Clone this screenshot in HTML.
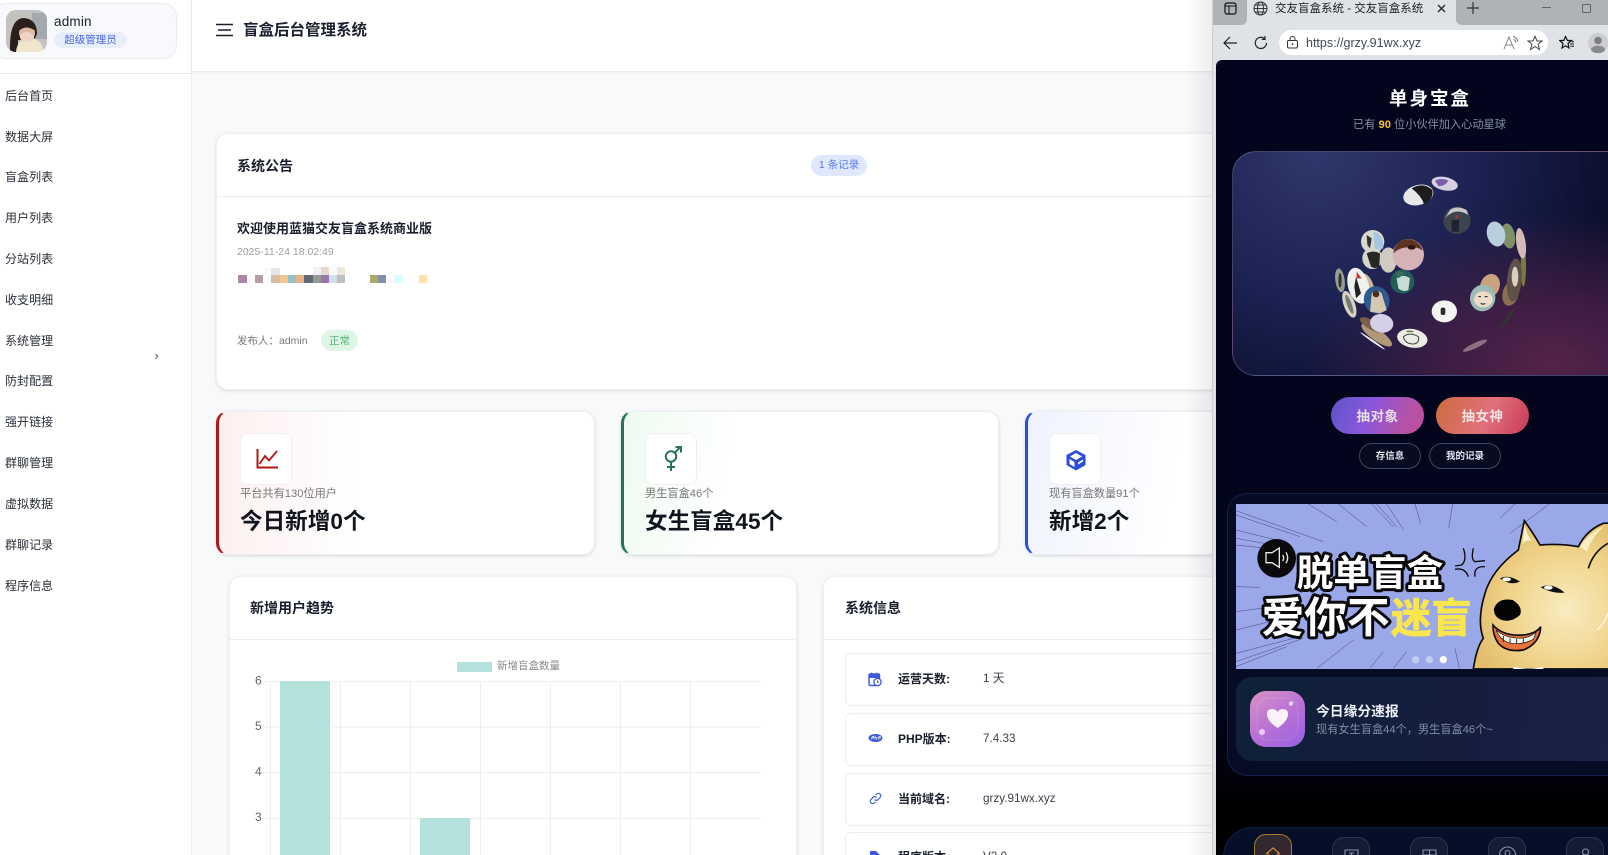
<!DOCTYPE html>
<html lang="zh-CN"><head><meta charset="utf-8"><title>盲盒后台管理系统</title>
<style>
*{box-sizing:border-box}
html,body{margin:0;padding:0;width:1608px;height:855px;overflow:hidden;background:#f8f9fb}
body{position:relative;font-family:"Liberation Sans","Noto Sans CJK SC",sans-serif;color:#1a1f2e}
.a{position:absolute;white-space:nowrap}
.m{position:absolute;left:5px;font-size:12px;line-height:20px;color:#2a2f3a;letter-spacing:.05px}
.card{position:absolute;background:#fff;border-radius:12px;border:1px solid #eef0f3;box-shadow:0 1px 3px rgba(0,0,0,.12);overflow:hidden}
.ct{position:absolute;font-size:14px;font-weight:700;line-height:20px;color:#1a1f2e;white-space:nowrap}
.stat{position:absolute;top:411px;height:144px;background:#fff;border-radius:12px;border:1px solid #eceef1;border-left:3px solid;box-shadow:0 1px 3px rgba(0,0,0,.14);overflow:hidden}
.ib{position:absolute;left:21px;top:21px;width:52px;height:52px;background:#fff;border-radius:8px;border:1px solid #f0f0f2}
.st{position:absolute;left:21px;top:72px;font-size:11.2px;line-height:20px;color:#777;white-space:nowrap}
.bg{position:absolute;left:21px;top:93px;font-size:22.6px;font-weight:700;line-height:34px;color:#10141f;white-space:nowrap}
.row{position:absolute;left:845px;width:400px;height:53px;background:#fff;border:1px solid #eceef1;border-radius:6px}
.lb{position:absolute;left:898px;font-size:12px;font-weight:700;line-height:20px;color:#1a1f2e;white-space:nowrap}
.vl{position:absolute;left:983px;font-size:11.7px;line-height:20px;color:#3a3f4a;white-space:nowrap}
.tile{position:absolute;top:837px;width:38px;height:40px;background:#141c34;border:1px solid #2b3550;border-radius:12px}
</style></head><body>

<!-- sidebar -->
<div class="a" style="left:0;top:0;width:192px;height:855px;background:#fff;border-right:1px solid #eaecef"></div>
<div class="a" style="left:-8px;top:3px;width:185px;height:56px;background:#f8f9fc;border:1px solid #e9ebef;border-radius:14px"></div>
<svg class="a" style="left:6px;top:10px" width="41" height="42" viewBox="0 0 41 42">
<defs><clipPath id="av"><rect width="41" height="42" rx="10"/></clipPath></defs>
<g clip-path="url(#av)"><rect width="41" height="42" fill="#c4c2bf"/><rect x="26" y="3" width="15" height="26" fill="#a4a9b0"/>
<path d="M4 42Q3 8 18 8Q31 9 31 24L28 30H12V42Z" fill="#2b1f1b"/>
<path d="M10 42Q11 30 22 28Q35 27 38 42Z" fill="#efe6cb"/>
<ellipse cx="21" cy="23" rx="8" ry="8" fill="#dfb8a6"/><ellipse cx="21" cy="27" rx="7" ry="5" fill="#ecd4c6"/>
<path d="M13 17Q20 11 29 18L28 20Q20 15 14 20Z" fill="#2b1f1b"/></g></svg>
<div class="a" style="left:54px;top:12px;font-size:13.5px;line-height:20px;color:#1a1f2e;letter-spacing:.2px">admin</div>
<div class="a" style="left:54px;top:32px;width:73px;height:16px;background:#e9eefb;border-radius:8px;text-align:center;font-size:10.5px;line-height:16px;color:#4a68e8">超级管理员</div>
<div class="a" style="left:0;top:73px;width:192px;height:1px;background:#e8eaee"></div>
<div class="a" style="left:192px;top:0;width:1030px;height:72px;background:#fff;border-bottom:1px solid #e8eaee;box-shadow:0 1px 2px rgba(0,0,0,.04)"></div>
<div class="m" style="top:86px">后台首页</div>
<div class="m" style="top:127px">数据大屏</div>
<div class="m" style="top:167px">盲盒列表</div>
<div class="m" style="top:208px">用户列表</div>
<div class="m" style="top:249px">分站列表</div>
<div class="m" style="top:290px">收支明细</div>
<div class="m" style="top:331px">系统管理</div>
<div class="m" style="top:371px">防封配置</div>
<div class="m" style="top:412px">强开链接</div>
<div class="m" style="top:453px">群聊管理</div>
<div class="m" style="top:494px">虚拟数据</div>
<div class="m" style="top:535px">群聊记录</div>
<div class="m" style="top:576px">程序信息</div>
<svg class="a" style="left:154px;top:353px" width="5" height="7"><path d="M1.5 1L3.8 3.5L1.5 6" fill="none" stroke="#666" stroke-width="1"/></svg>

<!-- header -->
<svg class="a" style="left:215px;top:23px" width="19" height="14"><path d="M1 1.5H18M3 7H16M1 12.5H18" stroke="#1a1f2e" stroke-width="1.6" fill="none"/></svg>
<div class="a" style="left:243px;top:20px;font-size:15.5px;font-weight:700;line-height:22px;color:#1a1f2e">盲盒后台管理系统</div>

<!-- announcement -->
<div class="card" style="left:216px;top:133px;width:1040px;height:257px"></div>
<div class="a" style="left:216px;top:196px;width:1000px;height:1px;background:#eceef1"></div>
<div class="ct" style="left:237px;top:156px">系统公告</div>
<div class="a" style="left:811px;top:155px;width:56px;height:21px;background:#dfe8fd;border-radius:11px;text-align:center;font-size:10.5px;line-height:21px;color:#5b7cf0">1 条记录</div>
<div class="a" style="left:237px;top:219px;font-size:13px;font-weight:700;line-height:20px;color:#1a1f2e">欢迎使用蓝猫交友盲盒系统商业版</div>
<div class="a" style="left:237px;top:242px;font-size:10.5px;line-height:20px;color:#9a9da3">2025-11-24 18:02:49</div>
<svg class="a" style="left:230px;top:260px" width="210" height="30">
<g transform="translate(-230,-260)">
<rect x="238" y="275" width="9" height="8" fill="#ae88a2"/><rect x="255" y="275" width="8" height="8" fill="#b89aa2"/><rect x="264" y="275" width="7" height="8" fill="#f7fdfe"/><rect x="271" y="275" width="9" height="8" fill="#dcbba6"/><rect x="271" y="268" width="9" height="7" fill="#e5e5e5"/><rect x="264" y="268" width="7" height="7" fill="#f8fbfc"/><rect x="280" y="275" width="8" height="8" fill="#f3c88f"/><rect x="288" y="275" width="8" height="8" fill="#95c1cb"/><rect x="296" y="275" width="8" height="8" fill="#e5b482"/><rect x="304" y="275" width="9" height="8" fill="#5f6873"/><rect x="313" y="275" width="8" height="8" fill="#979994"/><rect x="321" y="275" width="8" height="8" fill="#9a77ab"/><rect x="329" y="275" width="8" height="8" fill="#d0e0ee"/><rect x="337" y="275" width="8" height="8" fill="#bfc1be"/>
<rect x="313" y="267" width="8" height="8" fill="#eef1f6"/><rect x="321" y="267" width="8" height="8" fill="#e8d9cf"/><rect x="329" y="267" width="8" height="8" fill="#f8fafc"/><rect x="337" y="267" width="8" height="8" fill="#eee6da"/>
<rect x="370" y="275" width="8" height="8" fill="#a7a96f"/><rect x="378" y="275" width="8" height="8" fill="#8590ad"/><rect x="394" y="275" width="9" height="8" fill="#dcfdfd"/><rect x="419" y="275" width="8" height="8" fill="#fde3ac"/>
</g></svg>
<div class="a" style="left:237px;top:331px;font-size:10.5px;line-height:20px;color:#777">发布人：admin</div>
<div class="a" style="left:321px;top:330px;width:37px;height:21px;background:#dff6e6;border-radius:11px;text-align:center;font-size:10.5px;line-height:23px;color:#57b67a">正常</div>

<!-- stats -->
<div class="stat" style="left:216px;width:379px;border-left-color:#b01a12;background:linear-gradient(90deg,#fdf0f0,#fff 38%)">
<div class="ib"><svg style="position:absolute;left:14px;top:14px" width="24" height="22" viewBox="0 0 24 22"><path d="M2.5 1V19.5H23" fill="none" stroke="#b01a12" stroke-width="2"/><path d="M4.5 16L10 8L14 12.5L22 3" fill="none" stroke="#b01a12" stroke-width="1.8"/></svg></div>
<div class="st">平台共有130位用户</div><div class="bg">今日新增0个</div></div>
<div class="stat" style="left:621px;width:378px;border-left-color:#257453;background:linear-gradient(100deg,#effaf1,#fff 30%)">
<div class="ib"><svg style="position:absolute;left:14px;top:12px" width="24" height="26" viewBox="0 0 24 26"><circle cx="11" cy="10.5" r="5.2" fill="none" stroke="#257453" stroke-width="2"/><path d="M11 15.5V25M7 21H15M14.500 7L20.500 1M15.500 1H21V6.500" fill="none" stroke="#257453" stroke-width="2"/></svg></div>
<div class="st">男生盲盒46个</div><div class="bg">女生盲盒45个</div></div>
<div class="stat" style="left:1025px;width:300px;border-left-color:#2b4fd8;background:linear-gradient(100deg,#eff3fe,#fff 50%)">
<div class="ib"><svg style="position:absolute;left:14px;top:14px" width="24" height="24" viewBox="0 0 24 24"><path d="M12 2L21.500 7V17L12 22.500L2.500 17V7Z" fill="#2b4fd8"/><path d="M12 5L18 8.500L12 12L6 8.500ZM5.500 11L10.500 14V19L5.500 16ZM14 14.500L19 11.500V13.500L14 16.500Z" fill="#fff"/></svg></div>
<div class="st">现有盲盒数量91个</div><div class="bg">新增2个</div></div>

<!-- chart card -->
<div class="card" style="left:229px;top:576px;width:568px;height:300px"></div>
<div class="a" style="left:229px;top:639px;width:568px;height:1px;background:#eceef1"></div>
<div class="ct" style="left:250px;top:598px">新增用户趋势</div>
<div class="a" style="left:457px;top:662px;width:35px;height:10px;background:#b2e2db"></div>
<div class="a" style="left:497px;top:656px;font-size:10.5px;line-height:20px;color:#888">新增盲盒数量</div>
<svg class="a" style="left:240px;top:670px" width="540" height="185">
<g transform="translate(-240,-670)" stroke="#eceef0" stroke-width="1" fill="none">
<path d="M261 681.500H761M261 727H761M261 772.500H761M261 818.500H761"/>
<path d="M270.500 681V855M340.500 681V855M410.500 681V855M480.500 681V855M550.500 681V855M620.500 681V855M690.500 681V855"/>
</g>
<rect x="40" y="11" width="50" height="175" fill="#b2e2db"/><rect x="180" y="148" width="50" height="40" fill="#b2e2db"/>
<g font-size="12" fill="#666" font-family="Liberation Sans"><text x="15" y="14.500">6</text><text x="15" y="60">5</text><text x="15" y="105.500">4</text><text x="15" y="151">3</text></g>
</svg>

<!-- system info -->
<div class="card" style="left:823px;top:576px;width:440px;height:300px"></div>
<div class="a" style="left:823px;top:639px;width:400px;height:1px;background:#eceef1"></div>
<div class="ct" style="left:845px;top:598px">系统信息</div>
<div class="row" style="top:653px"></div><div class="row" style="top:713px"></div><div class="row" style="top:773px"></div><div class="row" style="top:832px"></div>
<svg class="a" style="left:868px;top:672px" width="14" height="15" viewBox="0 0 14 15"><rect x="1" y="2" width="10.500" height="11.500" rx="1.500" fill="none" stroke="#3a5be0" stroke-width="1.500"/><path d="M1 2H11.500V5.500H1ZM3.500 .5V2.500M9 .5V2.500" fill="#3a5be0" stroke="#3a5be0"/><circle cx="9.500" cy="10" r="3.600" fill="#fff" stroke="#3a5be0" stroke-width="1.300"/><path d="M9.500 8.400V10.200H11" stroke="#3a5be0" fill="none"/></svg>
<div class="lb" style="top:669px">运营天数:</div><div class="vl" style="top:669px">1 天</div>
<svg class="a" style="left:868px;top:733px" width="15" height="10" viewBox="0 0 15 10"><ellipse cx="7.500" cy="5" rx="7" ry="4" fill="#3a5be0"/><path d="M3.500 6.500L4.200 3.500H5.700V5H4M7 2.800V6.500M7 4.500H8.800V6.500M10.300 6.500L11 3.500H12.300V5H10.700" stroke="#fff" fill="none" stroke-width=".7"/></svg>
<div class="lb" style="top:729px">PHP版本:</div><div class="vl" style="top:729px">7.4.33</div>
<svg class="a" style="left:869px;top:792px" width="13" height="13" viewBox="0 0 13 13"><path d="M5.500 7.500A2.300 2.300 0 0 0 8.800 7.800L11 5.500A2.400 2.400 0 0 0 7.600 2L6.600 3M7.500 5.500A2.300 2.300 0 0 0 4.200 5.200L2 7.500A2.400 2.400 0 0 0 5.400 11L6.400 10" fill="none" stroke="#3a5be0" stroke-width="1.200"/></svg>
<div class="lb" style="top:789px">当前域名:</div><div class="vl" style="top:789px">grzy.91wx.xyz</div>
<svg class="a" style="left:869px;top:850px" width="13" height="5"><path d="M1 5V1H7L11 5" fill="#3a5be0"/></svg>
<div class="lb" style="top:847px">程序版本:</div><div class="vl" style="top:847px">V2.0</div>

<!-- shadow beside browser -->
<div class="a" style="left:1185px;top:0;width:27px;height:855px;background:linear-gradient(90deg,rgba(0,0,0,0),rgba(0,0,0,.07))"></div>

<!-- browser chrome -->
<div class="a" style="left:1212px;top:0;width:396px;height:855px;background:#dfe2e6;border-left:1px solid #cfd1d4"></div>
<div class="a" style="left:1213px;top:0;width:34px;height:25px;background:#aeb3b7;border-radius:0 0 6px 0"></div>
<div class="a" style="left:1456px;top:0;width:152px;height:25px;background:#aeb3b7;border-radius:0 0 0 6px"></div>
<svg class="a" style="left:1224px;top:2px" width="13" height="13"><rect x="1" y="1" width="11" height="11" rx="2" fill="none" stroke="#111" stroke-width="1.200"/><path d="M1 4H12M5 4V12" fill="none" stroke="#111" stroke-width="1"/></svg>
<svg class="a" style="left:1253px;top:1px" width="15" height="15" viewBox="0 0 15 15"><g fill="none" stroke="#333" stroke-width="1"><circle cx="7.500" cy="7.500" r="6.500"/><ellipse cx="7.500" cy="7.500" rx="3" ry="6.500"/><path d="M1 7.500H14M2 4H13M2 11H13"/></g></svg>
<div class="a" style="left:1275px;top:-1px;font-size:11.500px;line-height:20px;color:#222">交友盲盒系统 - 交友盲盒系统</div>
<svg class="a" style="left:1436px;top:3px" width="11" height="11"><path d="M2 2L9 9M9 2L2 9" stroke="#222" stroke-width="1.300"/></svg>
<svg class="a" style="left:1466px;top:1px" width="14" height="14"><path d="M7 1V13M1 7H13" stroke="#333" stroke-width="1.200"/></svg>
<div class="a" style="left:1542px;top:7px;width:9px;height:1px;background:#666"></div>
<div class="a" style="left:1582px;top:4px;width:9px;height:9px;border:1px solid #666;border-radius:1px"></div>
<svg class="a" style="left:1222px;top:35px" width="16" height="16"><path d="M15 8H2M8 2L2 8L8 14" fill="none" stroke="#222" stroke-width="1.200"/></svg>
<svg class="a" style="left:1253px;top:35px" width="16" height="16"><path d="M13.500 8A5.600 5.600 0 1 1 11.500 3.600M12 1V4.400H8.700" fill="none" stroke="#222" stroke-width="1.200"/></svg>
<div class="a" style="left:1279px;top:30px;width:269px;height:25px;background:#fff;border-radius:13px"></div>
<svg class="a" style="left:1286px;top:36px" width="13" height="13"><rect x="1.500" y="4.500" width="10" height="7.500" rx="1.500" fill="none" stroke="#333" stroke-width="1"/><path d="M4 4.500V3A2.500 2.500 0 0 1 9 3V4.500" fill="none" stroke="#333"/><circle cx="6.500" cy="8.200" r=".9" fill="#333"/></svg>
<div class="a" style="left:1306px;top:33px;font-size:12.500px;line-height:20px;color:#3d4a5c">https://grzy.91wx.xyz</div>
<svg class="a" style="left:1503px;top:35px" width="17" height="15"><path d="M1 14L6 2L11 14M3 10H9" fill="none" stroke="#888" stroke-width="1"/><path d="M10 1.500Q14 2.500 15 7M10.500 4.500Q12.500 5 13 7.500" fill="none" stroke="#777"/></svg>
<svg class="a" style="left:1527px;top:35px" width="16" height="16" viewBox="0 0 16 16"><path d="M8 1.200L10 6H15L11 9.300L12.500 14.500L8 11.500L3.500 14.500L5 9.300L1 6H6Z" fill="none" stroke="#444" stroke-width="1"/></svg>
<svg class="a" style="left:1559px;top:35px" width="16" height="16" viewBox="0 0 16 16"><path d="M6.500 1.500L8.500 5.500H12.500L9 8.500L10 13L6.500 10.800L3 13L4 8.500L.8 5.500H4.800Z" fill="none" stroke="#111" stroke-width="1.200"/><path d="M11 9H15M11.500 11.300H15M12.500 6.800H15" stroke="#111"/></svg>
<div class="a" style="left:1588px;top:33px;width:20px;height:20px;background:#cbccce;border-radius:50%"></div>
<svg class="a" style="left:1590px;top:35px" width="16" height="18"><circle cx="8" cy="5.500" r="3.800" fill="#7e7e80"/><ellipse cx="8" cy="14.500" rx="7" ry="3.700" fill="#8a8a8c"/></svg>

<!-- phone page -->
<div class="a" style="left:1216px;top:60px;width:392px;height:795px;border-radius:6px 0 0 0;overflow:hidden;background:linear-gradient(180deg,#03051c 0,#03051c 82%,#000 94%,#000 100%)"></div>
<div class="a" style="left:1389px;top:87px;font-size:18.500px;font-weight:700;line-height:24px;color:#fff;letter-spacing:2px">单身宝盒</div>
<div class="a" style="left:1353px;top:115px;font-size:11.200px;line-height:20px;color:#7f8ea8">已有 <b style="color:#fbbf24">90</b> 位小伙伴加入心动星球</div>

<div class="a" style="left:1232px;top:151px;width:420px;height:225px;border-radius:24px;border:1px solid rgba(160,170,210,.32);background:radial-gradient(ellipse 240px 150px at 320px 212px,#552349 0,rgba(78,34,72,.7) 45%,rgba(30,20,50,0) 100%),radial-gradient(ellipse 300px 280px at 85px 0,#30376a 0,#1b2150 55%,rgba(14,18,50,0) 100%),#0b0e2c"></div>

<svg class="a" style="left:1190px;top:140px" width="418" height="240" viewBox="0 0 1254 720">
<ellipse cx="1000" cy="380" rx="8" ry="60" fill="#7a7a40"/>
<ellipse cx="993" cy="310" rx="14" ry="46" transform="rotate(-8 993 310)" fill="#d5b8b8"/>
<ellipse cx="955" cy="288" rx="20" ry="38" transform="rotate(-10 955 288)" fill="#7d9068"/>
<ellipse cx="918" cy="282" rx="27" ry="38" transform="rotate(-15 918 282)" fill="#b9d0dc"/>
<ellipse cx="962" cy="460" rx="24" ry="38" transform="rotate(15 962 460)" fill="#8a7050"/>
<ellipse cx="973" cy="420" rx="22" ry="65" transform="rotate(5 973 420)" fill="#5f5048"/>
<ellipse cx="975" cy="410" rx="10" ry="30" fill="#d8d0c0"/>
<ellipse cx="952" cy="535" rx="5" ry="40" transform="rotate(35 952 535)" fill="#333"/>
<ellipse cx="855" cy="617" rx="40" ry="8" transform="rotate(-25 855 617)" fill="#8a7080"/>
<ellipse cx="900" cy="437" rx="29" ry="36" transform="rotate(20 900 437)" fill="#c9a27e"/>
<ellipse cx="878" cy="474" rx="38" ry="40" transform="rotate(15 878 474)" fill="#9dbcb8"/>
<ellipse cx="880" cy="478" rx="28" ry="24" fill="#ecdcc8"/><path d="M865 470h8M884 470h9M872 490q8 5 14 0" stroke="#222" stroke-width="3" fill="none"/>
<ellipse cx="764" cy="131" rx="40" ry="20" transform="rotate(12 764 131)" fill="#d6d0e0"/>
<path d="M735 122q20-10 40 0q-10 18-30 16z" fill="#7a5fa8"/>
<ellipse cx="685" cy="165" rx="46" ry="30" transform="rotate(-15 685 165)" fill="#e8e8e8"/>
<path d="M665 145q35-20 62 5q5 28-25 42q-8-25-37-47z" fill="#1d1d20"/>
<circle cx="801" cy="241" r="41" fill="#3d4450"/><path d="M765 235q30-35 70-10l-5-15q-30-15-50 0z" fill="#c8c8c8"/><path d="M785 240h22v35h-22z" fill="#1e2330"/><circle cx="800" cy="230" r="5" fill="#a33"/>
<ellipse cx="450" cy="421" rx="14" ry="36" transform="rotate(-8 450 421)" fill="#9a9e90"/><ellipse cx="450" cy="421" rx="5" ry="22" fill="#333"/>
<ellipse cx="478" cy="493" rx="17" ry="42" transform="rotate(-20 478 493)" fill="#d5d3bd"/><ellipse cx="478" cy="493" rx="7" ry="30" transform="rotate(-20 478 493)" fill="#777"/>
<ellipse cx="528" cy="445" rx="24" ry="46" transform="rotate(-15 528 445)" fill="#c8b8a0"/>
<ellipse cx="505" cy="437" rx="31" ry="55" transform="rotate(-15 505 437)" fill="#f0f0ee"/><path d="M498 410l15 50l-15 15l-5-35z" fill="#222"/><path d="M500 395l15 20h-15z" fill="#c33"/>
<ellipse cx="560" cy="480" rx="38" ry="42" transform="rotate(-20 560 480)" fill="#2f5a90"/><path d="M545 460q15-15 30 0l15 50l-20 10l-30-5z" fill="#d5c8b0"/><circle cx="558" cy="462" r="10" fill="#4a3020"/>
<ellipse cx="548" cy="305" rx="35" ry="35" fill="#d8d8cc"/><path d="M550 275q30 5 30 50l-25 5z" fill="#a5c5e5"/><path d="M530 285l15 10l-5 30l-8-10z" fill="#333"/>
<ellipse cx="547" cy="355" rx="30" ry="32" fill="#d5d5cc"/><path d="M530 340q20-10 40 0l-2 40q-15 8-25 0z" fill="#252825"/>
<ellipse cx="595" cy="360" rx="25" ry="38" fill="#cfcac2"/>
<circle cx="655" cy="344" r="47" fill="#d4b2b8"/><path d="M610 340q5-40 45-43q35 5 43 35q-20-15-45-10q-25 0-43 18z" fill="#5e3324"/><ellipse cx="665" cy="322" rx="12" ry="7" fill="#2a1a18"/>
<circle cx="637" cy="425" r="36" fill="#1f5f58"/><path d="M620 415q20-15 40 0l-5 35q-15 8-30-5z" fill="#c8dcd5"/><path d="M615 395q20-5 30 5l-20 15z" fill="#3b6a5a"/>
<ellipse cx="560" cy="585" rx="55" ry="17" transform="rotate(35 560 585)" fill="#b09878"/>
<ellipse cx="545" cy="555" rx="40" ry="14" transform="rotate(30 545 555)" fill="#7a6048"/>
<ellipse cx="575" cy="550" rx="35" ry="28" transform="rotate(10 575 550)" fill="#d6d0e6"/>
<ellipse cx="548" cy="603" rx="45" ry="3" transform="rotate(35 548 603)" fill="#eee"/>
<ellipse cx="667" cy="595" rx="46" ry="28" transform="rotate(10 667 595)" fill="#ecece4"/><path d="M640 590q20-15 45 0q5 20-15 22q-25 0-30-22zM650 575h20" fill="none" stroke="#444" stroke-width="3"/><path d="M645 574q15-6 25 0z" fill="#7ab850"/>
<ellipse cx="763" cy="514" rx="38" ry="33" fill="#f4f4f2"/><rect x="752" y="503" width="14" height="22" rx="6" fill="#2a2a2a"/>
</svg>

<!-- buttons -->
<div class="a" style="left:1331px;top:397px;width:93px;height:37px;border-radius:19px;background:linear-gradient(115deg,#5a55c8 0,#8a56dc 40%,#b352ab 75%,#c24f95 100%);text-align:center;font-size:13.500px;font-weight:700;line-height:39px;color:#e6dfe8;letter-spacing:.5px">抽对象</div>
<div class="a" style="left:1436px;top:397px;width:93px;height:37px;border-radius:19px;background:linear-gradient(115deg,#cf6b3c 0,#e0707c 55%,#c93a56 100%);text-align:center;font-size:13.500px;font-weight:700;line-height:39px;color:#f1e1e0;letter-spacing:.5px">抽女神</div>
<div class="a" style="left:1359px;top:443px;width:62px;height:26px;border-radius:13px;border:1px solid #3c4660;background:#070b20;text-align:center;font-size:9.500px;font-weight:700;line-height:26px;color:#e2e6ee">存信息</div>
<div class="a" style="left:1429px;top:443px;width:72px;height:26px;border-radius:13px;border:1px solid #3c4660;background:#070b20;text-align:center;font-size:9.500px;font-weight:700;line-height:26px;color:#e2e6ee">我的记录</div>

<!-- panel -->
<div class="a" style="left:1227px;top:493px;width:420px;height:283px;border-radius:20px;border:1px solid #12204a;background:#060c24"></div>
<svg class="a" style="left:1236px;top:504px" width="372" height="165" viewBox="138 72 1116 495" font-family="Liberation Sans,Noto Sans CJK SC,sans-serif">
<defs><radialGradient id="dg" cx=".62" cy=".6" r=".65"><stop offset="0" stop-color="#f8ecc0"/><stop offset=".6" stop-color="#f0d38a"/><stop offset="1" stop-color="#e3bd6c"/></radialGradient></defs>
<rect x="138" y="72" width="1116" height="495" fill="#9aa8ea"/>
<g stroke="#3a2040" fill="none" stroke-opacity=".75">
<path d="M138 92L400 185M138 105L330 170M138 150L280 185M138 175L250 195M138 195L230 205M138 320L210 322M138 395L215 385M138 450L260 420M138 520L330 470M138 545L340 475M138 560L290 500" stroke-width="1.500"/>
<path d="M355 72L440 125M445 72L530 140M545 72L610 140M560 72L620 140M590 72L640 148M675 72L692 130M788 72L776 145M975 72L930 115M1078 72L960 160M610 565L650 515M540 565L580 515M380 565L490 480M795 505L808 565" stroke-width="1.500"/>
</g>
<circle cx="260" cy="235" r="58" fill="#0a0a0c"/>
<path d="M228 218H246L268 204V262L246 248H228Z" fill="none" stroke="#e8e8e8" stroke-width="4"/><path d="M278 225Q284 233 278 243M288 217Q298 233 288 250" fill="none" stroke="#e8e8e8" stroke-width="4"/>
<text x="320" y="318" font-size="110" font-weight="700" fill="#fff" stroke="#0a0a0c" stroke-width="18" paint-order="stroke" stroke-linejoin="round">脱单盲盒</text>
<text x="215" y="458" font-size="128" font-weight="700" fill="#fff" stroke="#0a0a0c" stroke-width="18" paint-order="stroke" stroke-linejoin="round">爱你不</text>
<text x="603" y="458" font-size="121" font-weight="700" fill="#f9e54e" stroke="#f9e54e" stroke-width="3">迷盲</text>
<path d="M820 205Q832 240 815 255L795 258M850 205Q842 240 855 245L885 242M795 268Q825 262 835 290M885 260Q850 258 855 290" fill="none" stroke="#0a0a0c" stroke-width="4"/>
<path d="M985 210L1003 122Q1030 160 1050 195Q1110 190 1165 200Q1190 150 1240 130Q1254 128 1300 130L1300 567L850 567Q860 500 880 475Q860 420 885 340Q905 270 985 210Z" fill="url(#dg)" stroke="#0b0b0b" stroke-width="5"/>
<path d="M1003 135Q1012 165 1025 185Q1005 175 998 195Z" fill="#fbf3d5"/>
<path d="M1195 265Q1210 215 1254 190" fill="none" stroke="#111" stroke-width="5"/>
<path d="M1170 200Q1200 155 1240 140Q1205 175 1190 215Z" fill="#f8edc5"/>
<path d="M930 295Q955 282 990 305Q960 318 930 295Z" fill="#111"/><ellipse cx="950" cy="298" rx="13" ry="6" fill="#fff"/>
<path d="M1052 322Q1085 305 1124 338Q1090 342 1052 322Z" fill="#111"/><ellipse cx="1075" cy="323" rx="13" ry="6" fill="#fff"/>
<path d="M912 385Q925 352 968 360Q1000 380 990 405Q965 428 935 420Q910 410 912 385Z" fill="#050505"/>
<path d="M909 435Q940 470 1000 465Q1040 460 1052 440Q1050 490 1000 510Q950 518 925 490Q908 465 909 435Z" fill="#e8743a" stroke="#0b0b0b" stroke-width="5"/>
<path d="M918 450Q950 478 1000 474Q1030 468 1040 452L1030 478Q1000 495 960 490Q930 480 918 450Z" fill="#f7f5ea" stroke="#111" stroke-width="2"/>
<path d="M940 468V486M960 475V490M980 477V490M1000 476V488" stroke="#111" stroke-width="2.500"/>
<path d="M970 560Q1020 572 1060 560L1060 570H970Z" fill="#fff"/>
<path d="M1220 450Q1245 430 1254 400" fill="none" stroke="#fff8e0" stroke-width="4"/>
<circle cx="677" cy="539" r="11" fill="#fff" fill-opacity=".4"/><circle cx="718" cy="539" r="11" fill="#fff" fill-opacity=".4"/><circle cx="760" cy="539" r="11" fill="#fff"/>
</svg>

<div class="a" style="left:1236px;top:677px;width:400px;height:84px;border-radius:16px;background:linear-gradient(100deg,#0f2038,#161e40 60%,#1a2248)"></div>
<div class="a" style="left:1250px;top:691px;width:55px;height:56px;border-radius:16px;background:linear-gradient(145deg,#d892c6,#b670d6 55%,#9a60e2)"></div>
<svg class="a" style="left:1250px;top:691px" width="55" height="56" viewBox="0 0 55 56"><rect x="7" y="7" width="41" height="42" rx="12" fill="none" stroke="#fff" stroke-opacity=".12"/><path d="M27.500 37Q17 30 17 23Q17 18 22 18Q26 18 27.500 21Q29 18 33 18Q38 18 38 23Q38 30 27.500 37Z" fill="#fdf2fa"/><circle cx="41" cy="12.500" r="2.200" fill="#fff" fill-opacity=".7"/><circle cx="12" cy="41" r="3" fill="#fff" fill-opacity=".65"/></svg>
<div class="a" style="left:1316px;top:702px;font-size:13.800px;font-weight:700;line-height:20px;color:#eef1f8">今日缘分速报</div>
<div class="a" style="left:1316px;top:720px;font-size:11.200px;line-height:20px;color:#7f8ea3">现有女生盲盒44个，男生盲盒46个~</div>

<!-- bottom nav -->
<div class="a" style="left:1223px;top:827px;width:440px;height:60px;border-radius:30px 30px 0 0;border:1px solid #12204a;background:#050f28"></div>
<div class="tile" style="left:1254px;top:834px;width:38px;height:42px;background:linear-gradient(135deg,#2c2a30,#3d2430);border-color:#a87a30"></div>
<div class="tile" style="left:1332px"></div><div class="tile" style="left:1410px"></div><div class="tile" style="left:1488px"></div><div class="tile" style="left:1566px"></div>
<svg class="a" style="left:1254px;top:840px" width="354" height="15" viewBox="0 0 354 15" fill="none">
<path d="M12 14L19 8L26 14M14 13V15M24 13V15" stroke="#c28f35" stroke-width="1.300"/>
<path d="M91 10H104V15M91 10V15M95 13H100M97.500 13V15" stroke="#8a93a8" stroke-width="1.100"/>
<path d="M169 10H182V15H169ZM175.500 10V15" stroke="#8a93a8" stroke-width="1.100"/>
<circle cx="253.500" cy="15" r="8" stroke="#8a93a8" stroke-width="1.100"/><circle cx="253.500" cy="13" r="2.500" stroke="#8a93a8"/>
<circle cx="331.500" cy="12" r="3" stroke="#8a93a8" stroke-width="1.100"/>
</svg>
</body></html>
